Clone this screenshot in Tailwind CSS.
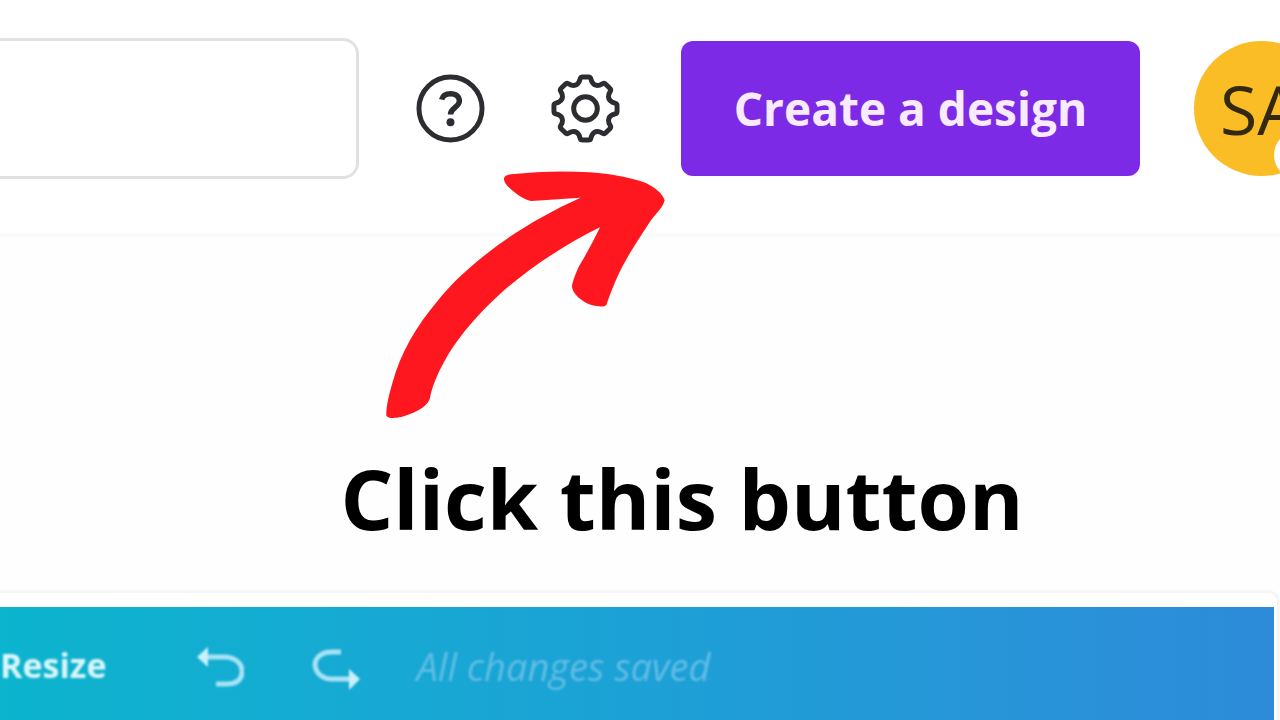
<!DOCTYPE html>
<html lang="en">
	<head>
		<meta charset="utf-8" />
		<title>Create a design</title>
		<script src="https://cdn.jsdelivr.net/npm/@tailwindcss/browser@4"></script>
	</head>
	<body class="relative flex min-h-screen flex-col overflow-hidden bg-white font-['Open_Sans',sans-serif]">
		<!-- Top navigation -->
		<header class="flex items-center overflow-hidden border-b-4 border-[#fafafa] pt-[38px] pb-[54px]">
			<input
				type="search"
				aria-label="Search"
				class="h-[141px] min-w-0 flex-1 rounded-r-2xl border-3 border-l-0 border-[#e1e1e1] bg-white px-6 text-4xl outline-none"
			/>
			<div class="ml-14 flex shrink-0 items-center gap-16">
				<button aria-label="Help" class="size-[71px]">
					<svg viewBox="-36 -36 72 72" fill="none" stroke="#2b2d31" stroke-width="5">
						<circle r="32" />
						<path d="M-9-9C-8-13-5-15 0-15C6-15 9-12 9-7.500C9-1 0-1 0 6" stroke-width="5.500" />
						<circle cy="14" r="4" fill="#2b2d31" stroke="none" />
					</svg>
				</button>
				<button aria-label="Settings" class="size-[71px]">
					<svg viewBox="-36 -36 72 72" fill="none" stroke="#2b2d31" stroke-width="5" stroke-linejoin="round">
						<path
							d="M-3-32H3Q5-32 5.500-30L6.500-27Q9.200-22.200 14.500-23.700L17.300-25.100Q19.100-26.200 20.500-24.700L24.700-20.500Q26.200-19.100 25.100-17.300L23.700-14.500Q22.200-9.200 27-6.500L30-5.500Q32-5 32-3V3Q32 5 30 5.500L27 6.500Q22.200 9.200 23.700 14.500L25.100 17.300Q26.200 19.100 24.700 20.500L20.500 24.700Q19.100 26.200 17.300 25.100L14.500 23.700Q9.200 22.200 6.500 27L5.500 30Q5 32 3 32H-3Q-5 32-5.500 30L-6.500 27Q-9.200 22.200-14.500 23.700L-17.300 25.100Q-19.100 26.200-20.500 24.700L-24.700 20.500Q-26.200 19.100-25.100 17.300L-23.700 14.500Q-22.200 9.200-27 6.500L-30 5.500Q-32 5-32 3V-3Q-32-5-30-5.500L-27-6.500Q-22.200-9.200-23.700-14.500L-25.100-17.300Q-26.200-19.100-24.700-20.500L-20.500-24.700Q-19.100-26.200-17.300-25.100L-14.500-23.700Q-9.200-22.200-6.500-27L-5.500-30Q-5-32-3-32Z"
						/>
						<circle r="12" />
					</svg>
				</button>
			</div>
			<button class="ml-[60px] h-[135px] w-[459px] shrink-0 rounded-xl bg-[#7d2ae7] text-[46px] font-bold text-[#f8eaff]">
				Create a design
			</button>
			<!-- Profile, runs off the right edge -->
			<button
				aria-label="Account"
				class="relative -mr-[49px] ml-[54px] size-[135px] shrink-0 rounded-full bg-[#fabd26] pl-[26px] text-left text-[68px] text-[#33290f]"
			>
				SA
				<span class="absolute top-[90px] left-20 size-12 rounded-full bg-white"></span>
			</button>
		</header>

		<main class="flex flex-1 flex-col justify-end bg-[#fefefe] pb-8">
			<h1 class="pl-[84px] text-center text-[83px] font-bold leading-[120px] text-black">Click this button</h1>
		</main>

		<!-- Arrow towards the button -->
		<svg class="absolute top-40 left-[370px] w-[310px]" viewBox="0 0 930 810" fill="#ff171f">
			<path
				d="M402 55C404 47 412 45 424 43C500 34 585 32 660 37C725 42 775 52 820 66C854 80 878 101 884 121C878 145 856 162 841 184C815 224 770 290 746 342C731 375 719 405 709 435C702 442 684 440 668 436C639 428 608 403 606 380C607 365 618 339 627 319C650 280 672 240 690 202C580 256 475 326 390 402C330 456 274 520 237 580C207 630 187 675 179 718C168 746 124 763 94 771C77 774 55 777 49 767C48 738 58 702 67 670C91 580 139 498 202 424C285 318 446 195 632 113L484 123C465 121 440 103 422 87C409 75 401 66 402 55Z"
			/>
		</svg>

		<!-- Editor toolbar -->
		<section class="rounded-tr-xl border-t-3 border-r-3 border-[#f6f6f6] bg-white pt-[14px] pr-[3px]">
			<div class="flex h-[113px] items-center bg-linear-to-r from-[#0cb4ce] via-[#1ca1d6] to-[#2d8bd9] pt-1">
				<button class="text-[34px] font-bold text-[#d9f6fb] blur-[1px]">Resize</button>
				<button aria-label="Undo" class="ml-[90px] size-12 blur-[1px]">
					<svg viewBox="0 0 48 48" fill="none" stroke="#a9e3f4" stroke-width="5">
						<path d="M8 15H30C41 16 47 23 46 31C45 39 39 42 31 42H20" />
						<path d="M1 15L12 5V25Z" fill="#c9f1fb" stroke="none" />
					</svg>
				</button>
				<button aria-label="Redo" class="ml-[68px] size-12 blur-[1px]">
					<svg viewBox="0 0 48 48" fill="none" stroke="#a9e3f4" stroke-width="5">
						<path d="M29 10H20C9 10 3 16 3 23C4 32 11 37 20 37H41" />
						<path d="M48 37L37 27V48Z" fill="#c9f1fb" stroke="none" />
					</svg>
				</button>
				<span class="ml-14 text-[38px] italic leading-12 text-[#62bde6] blur-[1px]">All changes saved</span>
			</div>
		</section>
	</body>
</html>
